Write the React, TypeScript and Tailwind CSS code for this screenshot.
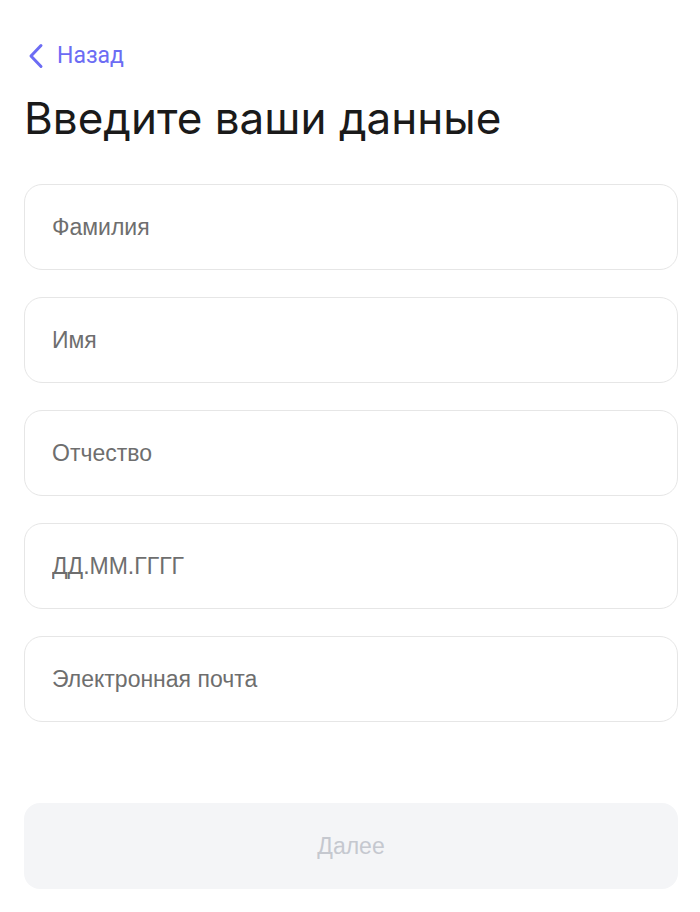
const fields = ["Фамилия", "Имя", "Отчество", "ДД.ММ.ГГГГ", "Электронная почта"]

export default function App() {
  return (
    <div className="min-h-screen bg-white pl-6 pr-[22px] pt-[42px] font-['Inter',sans-serif]">
      {/* Back */}
      <button className="flex items-center gap-[13px] text-[#6c6cf4] text-[23px] leading-[28px]">
        <svg width="16" height="26" viewBox="0 0 16 26" fill="none" className="ml-[4px]">
          <path d="M13 2.5 L3 13 L13 23.5" stroke="currentColor" strokeWidth="3" strokeLinecap="round" strokeLinejoin="round" />
        </svg>
        <span className="font-['Roboto',sans-serif]">Назад</span>
      </button>

      <h1 className="mt-[21px] text-[44px] leading-[54px] text-[#1a1a1a] font-normal">
        Введите ваши данные
      </h1>

      <div className="mt-[39px] flex flex-col gap-[27px]">
        {fields.map((f) => (
          <input
            key={f}
            placeholder={f}
            className="h-[86px] w-full rounded-[18px] border border-[#e6e6e6] px-[27px] text-[23px] font-['Liberation_Sans',sans-serif] text-[#222] placeholder:text-[#6e6e6e] outline-none"
          />
        ))}
      </div>

      <button
        disabled
        className="mt-[81px] h-[86px] w-full rounded-[16px] bg-[#f4f5f7] text-[23px] text-[#c5c8cf] font-['Liberation_Sans',sans-serif]"
      >
        Далее
      </button>
    </div>
  )
}
